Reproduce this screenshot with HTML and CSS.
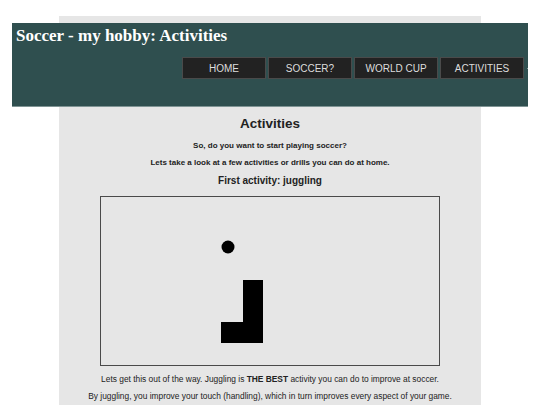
FILE: index.html
```html
<!DOCTYPE html>
<html>
<head>
<meta charset="utf-8">
<title>Soccer - my hobby: Activities</title>
<link rel="stylesheet" href="styles.css">
</head>
<body>
<div class="page">
  <header class="header">
    <h1 class="site-title">Soccer - my hobby: Activities</h1>
    <nav class="nav">
      <a class="nav-btn" href="#">HOME</a>
      <a class="nav-btn" href="#">SOCCER?</a>
      <a class="nav-btn" href="#">WORLD CUP</a>
      <a class="nav-btn" href="#">ACTIVITIES</a>
      <span class="nav-dot"></span>
    </nav>
  </header>
  <main class="content">
    <h2 class="heading">Activities</h2>
    <p class="lead">So, do you want to start playing soccer?</p>
    <p class="lead lead-2">Lets take a look at a few activities or drills you can do at home.</p>
    <h3 class="sub">First activity: juggling</h3>
    <div class="frame">
      <svg class="scene" width="338" height="168" viewBox="0 0 338 168">
        <circle cx="127" cy="50" r="6.5" fill="#000"/>
        <path d="M120 125 H142 V83 H162 V146 H120 Z" fill="#000"/>
      </svg>
    </div>
    <p class="text">Lets get this out of the way. Juggling is <b>THE BEST</b> activity you can do to improve at soccer.</p>
    <p class="text">By juggling, you improve your touch (handling), which in turn improves every aspect of your game.</p>
  </main>
</div>
</body>
</html>
```

FILE: styles.css
```css
html, body {
  margin: 0;
  padding: 0;
  background: #ffffff;
}

.page {
  width: 422px;
  margin: 16px auto 0;
  padding-top: 7px;
  background: #e6e6e6;
  min-height: 400px;
  font-family: "Liberation Sans", Arial, sans-serif;
  color: #222;
}

.header {
  margin-left: -47px;
  width: 516px;
  height: 84px;
  background: #2f4f4f;
  box-sizing: border-box;
  padding: 3px 4px 0 4px;
  border-bottom: 1px solid #7f9494;
}

.site-title {
  margin: 0;
  font-family: "Liberation Serif", "Times New Roman", serif;
  font-size: 17px;
  line-height: 20px;
  font-weight: bold;
  color: #ffffff;
}

.nav {
  display: flex;
  justify-content: flex-end;
  align-items: center;
  gap: 2px;
  margin-top: 11px;
}

.nav-btn {
  display: flex;
  align-items: center;
  justify-content: center;
  width: 84px;
  height: 22px;
  box-sizing: border-box;
  background: #222222;
  border: 1px solid #4a4a4a;
  color: #dddddd;
  font-size: 10px;
  text-decoration: none;
}

.nav-dot {
  width: 1px;
  height: 1px;
  background: #8a9a9a;
  margin-left: 1px;
  margin-right: -4px;
}

.content {
  display: flex;
  flex-direction: column;
  align-items: center;
  padding-top: 9px;
}

.heading {
  margin: 0;
  font-size: 13.5px;
  line-height: 16px;
  font-weight: bold;
  color: #222;
}

.lead {
  margin: 9px 0 0;
  font-size: 8px;
  line-height: 10px;
  font-weight: bold;
  color: #222;
}

.lead-2 {
  margin-top: 7px;
}

.sub {
  margin: 7px 0 0;
  font-size: 10px;
  line-height: 12px;
  font-weight: bold;
  color: #222;
}

.frame {
  margin-top: 9px;
  width: 340px;
  height: 170px;
  box-sizing: border-box;
  border: 1px solid #4a4a4a;
}

.scene {
  display: block;
}

.text {
  margin: 8px 0 0;
  font-size: 8.4px;
  line-height: 10px;
  color: #222;
  white-space: nowrap;
}

.text + .text {
  margin-top: 7px;
}
```
